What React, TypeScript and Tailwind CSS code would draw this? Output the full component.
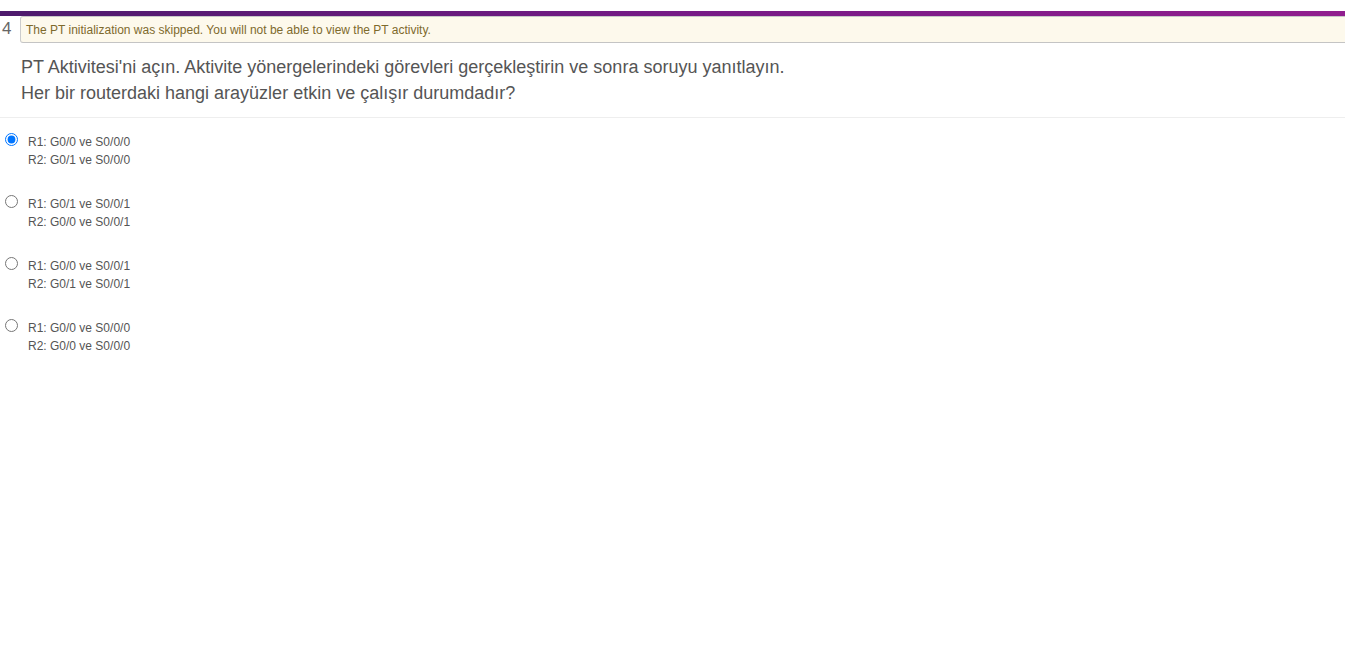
import React, { useState } from 'react';

interface Option {
  lines: string[];
}

const options: Option[] = [
  { lines: ['R1: G0/0 ve S0/0/0', 'R2: G0/1 ve S0/0/0'] },
  { lines: ['R1: G0/1 ve S0/0/1', 'R2: G0/0 ve S0/0/1'] },
  { lines: ['R1: G0/0 ve S0/0/1', 'R2: G0/1 ve S0/0/1'] },
  { lines: ['R1: G0/0 ve S0/0/0', 'R2: G0/0 ve S0/0/0'] },
];

const App: React.FC = () => {
  const [selected, setSelected] = useState(0);

  return (
    <div className="min-h-screen bg-white pt-[11px] font-['Liberation_Sans',Arial,sans-serif] text-[#555]">
      {/* top bar */}
      <div className="h-[5px] w-full bg-gradient-to-r from-[#4d1a6c] via-[#761a86] to-[#911e8e]" />

      {/* question number + notice */}
      <div className="flex items-start">
        <div className="w-[20px] pl-[2px] text-[17px] leading-[26px] text-[#666]">4</div>
        <div className="flex-1 h-[27px] flex items-center pl-[5px] bg-[#fdf9ec] border border-r-0 border-t-[#c8c8c8] border-l-[#ccc] border-b-[#c4c4c4] rounded-l-[3px] text-[12px] text-[#7d6a2c]">
          The PT initialization was skipped. You will not be able to view the PT activity.
        </div>
      </div>

      {/* question */}
      <div className="pl-[21px] pt-[11px] pb-[11px] text-[18px] leading-[26px] text-[#555]">
        <p>PT Aktivitesi'ni açın. Aktivite yönergelerindeki görevleri gerçekleştirin ve sonra soruyu yanıtlayın.</p>
        <p>Her bir routerdaki hangi arayüzler etkin ve çalışır durumdadır?</p>
      </div>
      <div className="h-px w-full bg-[#eeeeee]" />

      {/* options */}
      <div className="pt-[14px] flex flex-col gap-[25px]">
        {options.map((opt, i) => (
          <label key={i} className="flex items-start cursor-pointer">
            <input
              type="radio"
              name="q4"
              checked={selected === i}
              onChange={() => setSelected(i)}
              className="ml-[5px] mt-[1px] h-[13px] w-[13px] accent-[#0075ff]"
            />
            <div className="ml-[10px] pt-[1px] text-[12px] leading-[18px] text-[#555]">
              {opt.lines.map((l, j) => (
                <div key={j}>{l}</div>
              ))}
            </div>
          </label>
        ))}
      </div>
    </div>
  );
};

export default App;
